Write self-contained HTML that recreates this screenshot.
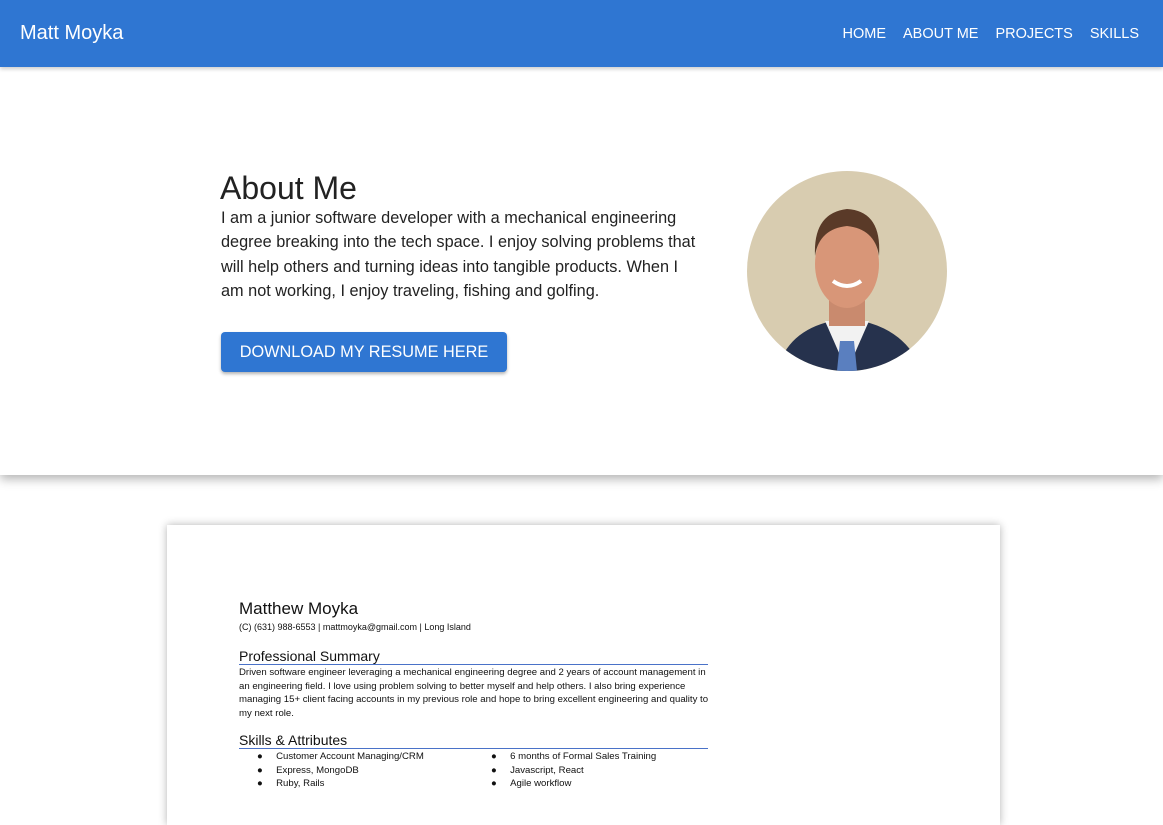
<!DOCTYPE html>
<html><head><meta charset="utf-8"><style>
*{margin:0;padding:0;box-sizing:border-box}
body{width:1163px;height:788px;overflow:hidden;background:#fff;font-family:"Liberation Sans",sans-serif;color:#222}
.nav{height:67px;background:#2f76d2;display:flex;align-items:center;justify-content:space-between;padding:0 24px 0 20px;color:#fff;box-shadow:0 2px 4px rgba(0,0,0,.2);position:relative;z-index:2}
.nav .t{font-size:20px}
.nav .l{display:flex;gap:17px;font-size:14.5px;font-family:"Liberation Sans",sans-serif}
.hero{height:408px;position:relative;box-shadow:0 4px 10px rgba(0,0,0,.3);z-index:1;background:#fff}
h1{position:absolute;left:220px;top:103px;font-size:32px;font-weight:400;color:#222}
.p{position:absolute;left:221px;top:139px;width:480px;font-size:16.3px;line-height:24.3px;color:#222}
.btn{position:absolute;left:221px;top:265px;width:286px;height:40px;background:#2f76d2;color:#fff;font-size:16.3px;border-radius:4px;display:flex;align-items:center;justify-content:center;box-shadow:0 2px 3px rgba(0,0,0,.3)}
.photo{position:absolute;left:747px;top:104px;width:200px;height:200px;border-radius:50%;overflow:hidden}
.sheet{position:absolute;left:167px;top:525px;width:833px;height:300px;background:#fff;box-shadow:0 0 8px rgba(0,0,0,.3)}
.r{position:absolute;left:72px;font-family:"Liberation Sans",sans-serif;color:#111}
.hd{font-size:14px;border-bottom:1px solid #4a72c8;width:469px;line-height:16px}
.sm{font-size:9.6px;line-height:13.5px}
</style></head><body>
<div class="nav"><div class="t">Matt Moyka</div><div class="l"><span>HOME</span><span>ABOUT ME</span><span>PROJECTS</span><span>SKILLS</span></div></div>
<div class="hero">
<h1>About Me</h1>
<div class="p">I am a junior software developer with a mechanical engineering degree breaking into the tech space. I enjoy solving problems that will help others and turning ideas into tangible products. When I am not working, I enjoy traveling, fishing and golfing.</div>
<div class="btn">DOWNLOAD MY RESUME HERE</div>
<div class="photo"><svg width="200" height="200" viewBox="0 0 200 200">
<rect width="200" height="200" fill="#d8ccb0"/>
<path d="M30 200 Q40 160 85 150 L115 150 Q160 160 175 200Z" fill="#26324d"/>
<path d="M78 150 L100 200 L122 150Z" fill="#f2f2f2"/>
<path d="M93 170 L107 170 L110 200 L90 200Z" fill="#5a7fbf"/>
<rect x="82" y="120" width="36" height="35" fill="#c98a6e"/>
<ellipse cx="100" cy="93" rx="32" ry="44" fill="#d89678"/>
<path d="M68 85 Q66 42 100 38 Q135 40 132 85 Q128 58 100 55 Q72 58 68 85Z" fill="#5a3a28"/>
<path d="M86 110 Q100 120 114 110" stroke="#fff" stroke-width="4" fill="none"/>
</svg></div>
</div>
<div class="sheet">
<div class="r" style="top:74px;font-size:17px">Matthew Moyka</div>
<div class="r" style="top:97px;font-size:9px">(C) (631) 988-6553 | mattmoyka@gmail.com | Long Island</div>
<div class="r hd" style="top:123px">Professional Summary</div>
<div class="r sm" style="top:141px;width:470px">Driven software engineer leveraging a mechanical engineering degree and 2 years of account management in an engineering field. I love using problem solving to better myself and help others. I also bring experience managing 15+ client facing accounts in my previous role and hope to bring excellent engineering and quality to my next role.</div>
<div class="r hd" style="top:207px">Skills &amp; Attributes</div>
<div class="r sm" style="top:225px;left:90px">●&nbsp;&nbsp;&nbsp;&nbsp;&nbsp;Customer Account Managing/CRM<br>●&nbsp;&nbsp;&nbsp;&nbsp;&nbsp;Express, MongoDB<br>●&nbsp;&nbsp;&nbsp;&nbsp;&nbsp;Ruby, Rails</div>
<div class="r sm" style="top:225px;left:324px">●&nbsp;&nbsp;&nbsp;&nbsp;&nbsp;6 months of Formal Sales Training<br>●&nbsp;&nbsp;&nbsp;&nbsp;&nbsp;Javascript, React<br>●&nbsp;&nbsp;&nbsp;&nbsp;&nbsp;Agile workflow</div>
</div>
</body></html>
